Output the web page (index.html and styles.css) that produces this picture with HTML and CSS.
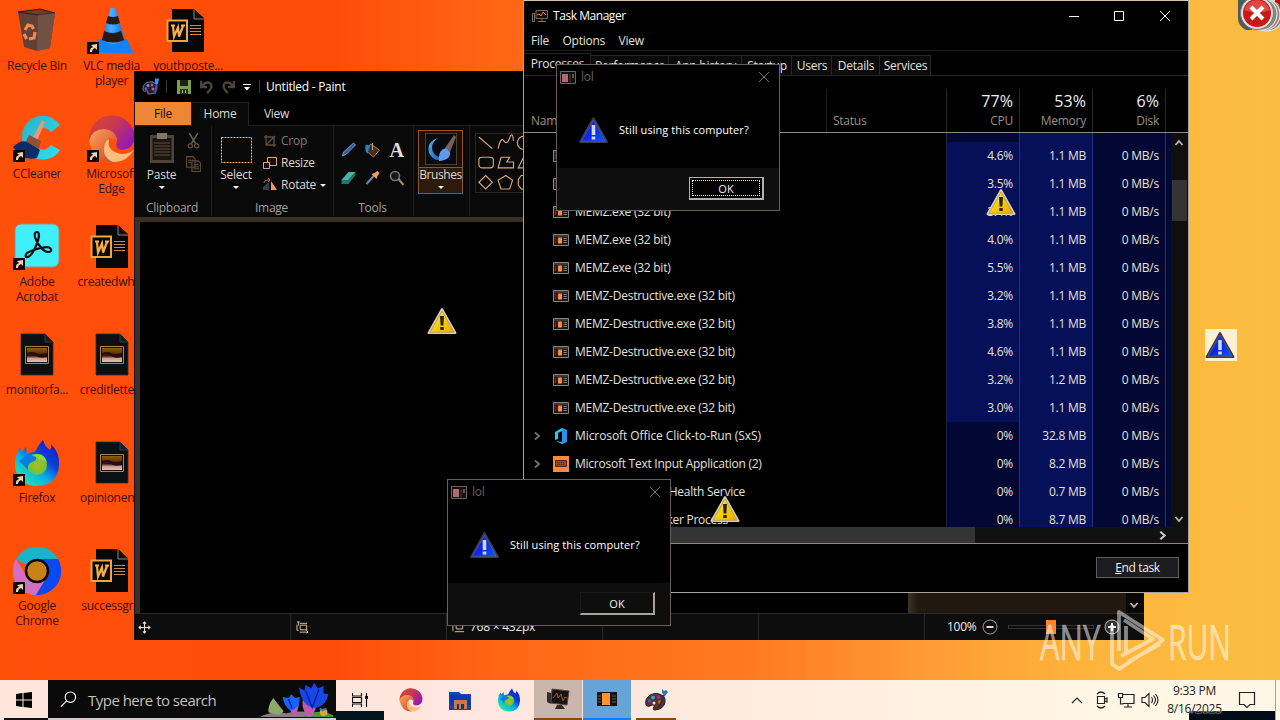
FILE: index.html
```html
<!DOCTYPE html>
<html lang="en">
<head>
<meta charset="utf-8">
<title>Desktop</title>
<link rel="stylesheet" href="styles.css">
</head>
<body>
<svg class="defs" width="0" height="0" aria-hidden="true">
  <defs>
    <linearGradient id="gYellow" x1="0" y1="0" x2="1" y2="1"><stop offset="0" stop-color="#fff36a"/><stop offset=".5" stop-color="#f3d00c"/><stop offset="1" stop-color="#f0a010"/></linearGradient>
    <linearGradient id="gBlue" x1="0" y1="0" x2="1" y2="1"><stop offset="0" stop-color="#2a2fe0"/><stop offset=".5" stop-color="#0c24e8"/><stop offset="1" stop-color="#0a60f0"/></linearGradient>
    <linearGradient id="gEdge" x1="0" y1="0" x2="1" y2=".6"><stop offset="0" stop-color="#d8452c"/><stop offset=".5" stop-color="#c83a50"/><stop offset="1" stop-color="#9a1ab0"/></linearGradient>
    <linearGradient id="gEdge2" x1="0" y1="0" x2="1" y2="1"><stop offset="0" stop-color="#ffa45c"/><stop offset="1" stop-color="#c84420"/></linearGradient>
    <linearGradient id="gFox" x1="1" y1="0" x2=".2" y2="1"><stop offset="0" stop-color="#0a14c0"/><stop offset=".4" stop-color="#0a40d8"/><stop offset=".65" stop-color="#0aaee8"/><stop offset="1" stop-color="#20f0a0"/></linearGradient>
    <radialGradient id="gGlobe"><stop offset="0" stop-color="#b8b820"/><stop offset="1" stop-color="#60c840"/></radialGradient>
    <linearGradient id="gCC" x1="0" y1="0" x2="1" y2="1"><stop offset="0" stop-color="#28b0c8"/><stop offset="1" stop-color="#30e0f0"/></linearGradient>
    <linearGradient id="gSun" x1="0" y1="0" x2="0" y2="1"><stop offset="0" stop-color="#8a6010"/><stop offset=".4" stop-color="#5a3008"/><stop offset=".55" stop-color="#301010"/><stop offset=".75" stop-color="#c8a090"/><stop offset="1" stop-color="#e0c0b0"/></linearGradient>
    <linearGradient id="gBrush" x1="0" y1="0" x2="1" y2="1"><stop offset="0" stop-color="#4ab8e8"/><stop offset="1" stop-color="#1658c8"/></linearGradient>
    <linearGradient id="gCone" x1="0" y1="0" x2="1" y2="0"><stop offset="0" stop-color="#0c70e8"/><stop offset=".4" stop-color="#4ab0ff"/><stop offset="1" stop-color="#0a66e0"/></linearGradient>

    <symbol id="warn" viewBox="0 0 30 28">
      <path d="M15 2 28.5 26H1.500Z" fill="url(#gYellow)" stroke="#d8cfc0" stroke-width="2" stroke-linejoin="round"/>
      <path d="M15 4 27 25.300H3Z" fill="none" stroke="#a87c10" stroke-width=".6"/>
      <path d="M13 9h4l-.6 9.500h-2.800ZM13.300 20h3.400v3h-3.400Z" fill="#2a220c"/>
    </symbol>
    <symbol id="info" viewBox="0 0 30 28">
      <path d="M15 2 28.500 26H1.500Z" fill="url(#gBlue)" stroke="#3c3a3c" stroke-width="2" stroke-linejoin="round"/>
      <path d="M15 4 27 25.300H3Z" fill="none" stroke="#5874d8" stroke-width=".5"/>
      <path d="M13.200 9h3.600v10h-3.600ZM13.200 20.500h3.600v3h-3.600Z" fill="#cfd8ff"/>
    </symbol>
    <symbol id="arrow" viewBox="0 0 12 12">
      <path d="M0 0h12v12H0Z" fill="#080808"/>
      <path d="M3 10V8q0-2 3-3L4 3l6-1v6L8 6Q5 7 5 10Z" fill="#ecd2a8"/>
    </symbol>
    <symbol id="word" viewBox="3 0 48 48">
      <path d="M11 2h22l10 9v34H11Z" fill="#070707"/>
      <path d="M33 2v10h10" fill="#16100c" stroke="#8a8480" stroke-width="1"/>
      <path d="M6.500 13.500h19.500v20.500H6.500Z" fill="#0a0806" stroke="#f0a63c" stroke-width="2"/>
      <path d="M10 18.500h4M12 19l1 10.500 4-9 1 9L22 19M20 18.500h4" fill="none" stroke="#f5b04a" stroke-width="2.200"/>
      <path d="M29 18.500h11M29 21.500h11M29 24.500h11M29 27.500h11" stroke="#c88850" stroke-width="1"/>
    </symbol>
    <symbol id="pic" viewBox="3 0 48 48">
      <path d="M11 3h24l8 8v33H11Z" fill="#0d1012" stroke="#26333a" stroke-width=".8"/>
      <path d="M35 3v8h8" fill="#1c1c1e" stroke="#33383a"/>
      <path d="M15.500 15.500h23v17h-23Z" fill="#150f09" stroke="#a88458" stroke-width="1"/>
      <path d="M17 17h20v14H17Z" fill="url(#gSun)"/>
      <path d="M17 22q6-2 9 0t11 0v4q-7 2-11-1t-9-1Z" fill="#2a0b0c"/>
    </symbol>
    <symbol id="edge" viewBox="0 0 48 48">
      <path d="M1 25A23 23 0 0 1 47 22Q46 34 34 35Q26 34 29 26Q28 15 17 15Q6 15 1 25Z" fill="url(#gEdge)"/>
      <path d="M1 25Q5 14 16 14Q28 15 29 26Q20 19 17 29Q15 39 25 47Q5 47 1 25Z" fill="url(#gEdge2)"/>
      <path d="M17 29Q13 42 25 47Q38 48 46 35Q36 42 27 37Q19 34 21 24Q18 25 17 29Z" fill="#ffbe80"/>
    </symbol>
    <symbol id="firefox" viewBox="0 0 48 48">
      <path d="M2 27Q2 15 7 9l2 4Q11 10 13 8l1 7q3-2 8-2Q26 5 30 1q2 7 7 10 2-3 1-6 9 9 8 21Q45 46 24 47 4 46 2 27Z" fill="url(#gFox)"/>
      <circle cx="24" cy="26" r="10" fill="url(#gGlobe)"/>
      <path d="M6 22q8-8 17-4 1 4-4 5-5 1-4 8-4-5-9-9Z" fill="#0a7ce0"/>
      <path d="M18 16q14-4 16 8-4-5-8-3-2-4-8-5Z" fill="#86dd30"/>
    </symbol>
    <symbol id="exe" viewBox="0 0 16 12">
      <path d="M.5.5h15v11H.5Z" fill="#1c1816" stroke="#8a8681"/>
      <path d="M1 2h14" stroke="#5c5854"/>
      <path d="M5 3.500h4v6H5Z" fill="#ff8a3c"/>
      <path d="M2.500 4v5" stroke="#702810" stroke-width="1.500"/>
      <path d="M10.500 4.500H14M10.500 6.500H14M10.500 8.500H14" stroke="#9a948c" stroke-width=".8"/>
    </symbol>
    <symbol id="lol" viewBox="0 0 16 13">
      <path d="M.5.500h15v12H.5Z" fill="#151010" stroke="#6c6662"/>
      <path d="M2 3h6v8H2Z" fill="#b06a72"/><path d="M9 3h2v8H9Z" fill="#3a2022"/><path d="M12 3h2v4h-2Z" fill="#555"/>
    </symbol>
    <symbol id="x" viewBox="0 0 12 12"><path d="m1 1 10 10M11 1 1 11" fill="none" stroke="currentColor"/></symbol>
    <symbol id="palette" viewBox="0 0 24 24">
      <path d="M2 17C0 9 8 4 15 6q7 2 6 8-1 7-10 8-3 0-1-3 1-3-2-2-4 3-6 0Z" fill="#5b3226" stroke="#2a1c24" stroke-width="1"/>
      <circle cx="9" cy="9.500" r="2" fill="#20a8c8"/><circle cx="14.500" cy="9" r="1.900" fill="#8c30b0"/><circle cx="5.500" cy="13" r="1.700" fill="#4a50d8"/><circle cx="16" cy="14" r="2" fill="#d06030"/><circle cx="10" cy="15" r="1.500" fill="#f0d8c8"/>
      <path d="M20 7 15 20" stroke="#23305c" stroke-width="2"/><path d="m18 1 2 2 2-1 2 2-3 4-3-3Z" fill="#2878c0"/>
    </symbol>
    <symbol id="palette-dark" viewBox="0 0 18 18">
      <path d="M1 12C0 6 6 3 11 4q5 2 4 6-1 6-8 6-2 0-1-2 0-2-2-1-2 1-3-1Z" fill="#2a1a24" stroke="#8a70a8"/>
      <circle cx="6" cy="7.500" r="1.500" fill="#30b8d0"/><circle cx="10" cy="7" r="1.400" fill="#c048b8"/><circle cx="4" cy="10.500" r="1.300" fill="#6468e8"/><circle cx="11" cy="11" r="1.500" fill="#e05848"/>
      <path d="m15 4-2 12" stroke="#2060c8" stroke-width="2"/><path d="m13 0 2 1 1-1 1 1-1 5h-3Z" fill="#3098e8"/>
    </symbol>
    <symbol id="chev" viewBox="0 0 10 10"><path d="m1.500 3 3.500 4 3.500-4" fill="none" stroke="currentColor" stroke-width="1.800"/></symbol>
  </defs>
</svg>

<div class="desktop">
  <div class="shortcuts">
    <div class="shortcut"><svg viewBox="0 0 48 48">
      <path d="M5 5 27 2 42 6 37 41 24 44 11 40Z" fill="#54403a" opacity=".92"/><path d="m5 5 20 3 17-2L27 2Z" fill="#7c3820" stroke="#2e1a14"/><path d="m25 8-1 36 13-3 5-35Z" fill="#77574c" opacity=".75"/>
      <g fill="none" stroke="#f08a50" stroke-width="3.200"><path d="m12 23 3-5 4 1 1.500 3M22 25l-1 6-5 1M13.500 32 11 27"/></g></svg><span>Recycle Bin</span></div>
    <div class="shortcut"><svg viewBox="0 0 48 48">
      <path d="M10 32h29l6 14H5Z" fill="#1482f8"/><path d="M22.500 1h5l9.500 33q-12 6-23 0Z" fill="url(#gCone)"/><path d="m20 9-2 7q7 3 14 0l-2-7q-5 2-10 0ZM16 24l-2 9q11 5 22 0l-3-9q-8 4-17 0Z" fill="#241a1a"/></svg><svg class="link"><use href="#arrow"/></svg><span>VLC media<br>player</span></div>
    <div class="shortcut"><svg><use href="#word"/></svg><span>youthposte...</span></div>

    <div class="shortcut"><svg viewBox="0 0 48 48">
      <path d="M47 10Q36-4 20 3 4 13 11 33q11 17 29 9 5-3 7-7l-9-5q-7 8-14 2-5-8 1-17 7-5 13 2Z" fill="url(#gCC)"/>
      <path d="m29 5 3 2-9 21-5-2Z" fill="#e49a78"/><path d="m16 20 12 6-3 10-14-5Z" fill="#90503c"/><path d="M0 32q8-8 14-5l13 8-3 8q-12 3-20-6Z" fill="#102c68"/></svg><svg class="link"><use href="#arrow"/></svg><span>CCleaner</span></div>
    <div class="shortcut"><svg><use href="#edge"/></svg><svg class="link"><use href="#arrow"/></svg><span>Microsoft<br>Edge</span></div>
    <div></div>

    <div class="shortcut"><svg viewBox="0 0 48 48"><rect x="2" y="1" width="44" height="43" rx="6" fill="#3ff0fc" stroke="#9c8c70"/>
      <path d="M24 9q-3 0-2 5 1 4 4 8 5 7 9 7 4 0 3-3-2-3-10-1-9 2-14 5-2 2-1 4 3 1 7-5 5-9 6-16 0-4-2-4Z" fill="none" stroke="#101010" stroke-width="2.200"/></svg><svg class="link"><use href="#arrow"/></svg><span>Adobe<br>Acrobat</span></div>
    <div class="shortcut doc"><svg><use href="#word"/></svg><span>createdwhe...</span></div>
    <div></div>

    <div class="shortcut"><svg><use href="#pic"/></svg><span>monitorfa...</span></div>
    <div class="shortcut doc"><svg><use href="#pic"/></svg><span>creditletter...</span></div>
    <div></div>

    <div class="shortcut"><svg><use href="#firefox"/></svg><svg class="link"><use href="#arrow"/></svg><span>Firefox</span></div>
    <div class="shortcut doc"><svg><use href="#pic"/></svg><span>opinionent...</span></div>
    <div></div>

    <div class="shortcut"><svg viewBox="0 0 48 48">
      <path d="M24 24 3 12A24 24 0 0 1 45 12Z" fill="#18b4cc"/><path d="M3 12A24 24 0 0 0 23 48L34 30 14 30Z" fill="#d070c0"/><path d="M45 12H24l10 18-11 18A24 24 0 0 0 45 12Z" fill="#0a48f0"/>
      <circle cx="24" cy="24" r="11" fill="#c88018" stroke="#080808" stroke-width="2.500"/></svg><svg class="link"><use href="#arrow"/></svg><span>Google<br>Chrome</span></div>
    <div class="shortcut"><svg><use href="#word"/></svg><span>successgr...</span></div>
    <div></div>
  </div>

  <section class="window paint">
    <header class="paint-title">
      <svg class="i18"><use href="#palette-dark"/></svg><i class="bar"></i>
      <svg class="save" viewBox="0 0 14 14"><path d="M0 0h14v14H0Z" fill="#7aa04c"/><path d="M3 0h8v6H3Z" fill="#1c2414"/><path d="M3 9h8v5H3Z" fill="#26301c"/><path d="M5 10h1v3H5Zm3 0h1v3H8Z" fill="#9ab070"/></svg>
      <svg class="undo" viewBox="0 0 14 14"><path d="M1 1v6h6M2 6Q6 1 10 3q4 4-3 10" fill="none" stroke="#4c433a" stroke-width="2.400"/></svg>
      <svg class="undo" viewBox="0 0 14 14"><path d="M13 1v6H7M12 6Q8 1 4 3q-4 4 3 10" fill="none" stroke="#4c433a" stroke-width="2.400"/></svg>
      <svg class="drop" viewBox="0 0 8 8"><path d="M0 .5h8" stroke="#fff"/><path d="M1 3h6L4 6.500Z" fill="#fff"/></svg><i class="bar"></i>
      <span>Untitled - Paint</span>
    </header>
    <nav class="paint-tabs"><span class="file">File</span><span class="home">Home</span><span class="view">View</span></nav>
    <div class="ribbon">
      <div class="group clipboard">
        <div class="tools-row">
          <div class="big"><svg viewBox="0 0 26 32"><path d="M1 3h24v28H1Z" fill="#4e4336"/><path d="M3.500 6h19v22h-19Z" fill="#1c1611"/><path d="M8 1h10v6H8Z" fill="#80756a"/><path d="M5 11h16M5 14h16M5 17h16M5 20h16M5 23h16" stroke="#5c4c3c"/></svg><span>Paste</span><b class="tri"></b></div>
          <div class="small-stack"><svg viewBox="0 0 16 16"><path d="m4 1 6 10M12 1 6 11" stroke="#6c6055" stroke-width="1.500"/><circle cx="5" cy="13" r="2" fill="none" stroke="#6c6055"/><circle cx="11" cy="13" r="2" fill="none" stroke="#6c6055"/></svg>
          <svg viewBox="0 0 16 16"><path d="M1.500 1.500h6l2 2v8h-8ZM6.500 5.500h6l2 2v8h-8Z" fill="#120e0a" stroke="#5c4c3c"/><path d="M8 9h5M8 11h5M8 13h5M3 5h3M3 7h3" stroke="#5c4c3c"/></svg></div>
        </div>
        <em>Clipboard</em>
      </div>
      <div class="group image">
        <div class="tools-row">
          <div class="big select"><svg viewBox="0 0 31 26"><path d="M.5.500h30v25H.5Z" fill="none" stroke="#f0bc88" stroke-dasharray="2 1"/></svg><span>Select</span><b class="tri"></b></div>
          <div class="commands">
            <div class="off"><svg viewBox="0 0 14 14"><path d="M3 1v10h10M1 3h10v10M3 11l9-9" fill="none" stroke="#5c4c40" stroke-width="1.400"/></svg>Crop</div>
            <div><svg viewBox="0 0 14 14"><path d="M4.500 1.500h9v8h-9Z" fill="#1a0c06" stroke="#eba474"/><path d="M.5 6.500h6v6h-6Z" fill="#1a0c06" stroke="#eba474"/></svg>Resize</div>
            <div><svg viewBox="0 0 14 14"><path d="M0 12V9l6-5v8Z" fill="#33404c"/><path d="M8 12V3l6 9Z" fill="#f09860"/><path d="M1 5q0-3 5-3M5 0l2 2-2 2" fill="none" stroke="#e06820"/></svg>Rotate<b class="tri"></b></div>
          </div>
        </div>
        <em>Image</em>
      </div>
      <div class="group tools">
        <div class="tool-grid">
          <svg viewBox="0 0 16 16"><path d="m2 14 1-4L13 1l2 2L6 12Z" fill="#3c58a0" stroke="#92a8dc" stroke-width=".8"/></svg>
          <svg viewBox="0 0 16 16"><path d="m6 2 9 6-6 7-7-6Z" fill="#443020" stroke="#a48060"/><path d="M1 3q3-1 4 2l-2 7q-3-3-2-9Z" fill="#1c88d0"/><path d="M8 1v7" stroke="#c8a078"/></svg>
          <span>A</span>
          <svg viewBox="0 0 16 16"><path d="m1 10 7-8h7l-7 8Z" fill="#48b4a8"/><path d="m1 10h7l7-8v3l-7 9H1Z" fill="#1f7872"/></svg>
          <svg viewBox="0 0 16 16"><path d="m2 14 8-9" stroke="#7088a8" stroke-width="2"/><path d="m7 4 3-1 3-2 2 2-2 3-1 3Z" fill="#f0a060"/></svg>
          <svg viewBox="0 0 16 16"><circle cx="6.500" cy="6" r="4.500" fill="#181818" stroke="#787370" stroke-width="1.600"/><path d="m10 9 5 6" stroke="#a08878" stroke-width="2"/></svg>
        </div>
        <em>Tools</em>
      </div>
      <div class="group brushes"><div class="brush-btn"><svg viewBox="0 0 32 32"><path d="M0 0h32v32H0Z" fill="#070a10" stroke="#987048"/><path d="M13 5Q1 9 4 20q6 11 16 5-12 0-13-10 0-6 6-10Z" fill="url(#gBrush)"/><path d="m20 15 9-13 2 2-6 15Z" fill="#78605a"/><path d="M14 24q0-7 7-9l4 4q1 8-11 9Z" fill="#609ae8"/></svg><span>Brushes</span><b class="tri"></b></div></div>
      <div class="group shapes"><svg viewBox="0 0 52 60"><g fill="none" stroke="#d8a678" stroke-width="1.200"><path d="m3 3 14 12M23 15q3-13 6-8t6-3 4 3"/><circle cx="50" cy="9" r="7"/><rect x="3" y="24" width="15" height="11" rx="3"/><path d="M26 24h9l-3 5h7v6H23ZM50 23l-6 12h8M10 43l7 7-7 7-7-7ZM31 43l7 5-3 9h-9l-3-9Z"/><path d="m47 43-3 4v6l3 4h5V43Z"/></g></svg></div>
    </div>
    <div class="work"><div class="canvas"></div><div class="backing"></div><div class="vscroll"><svg><use href="#chev"/></svg></div></div>
    <footer class="status">
      <div class="s1"><svg viewBox="0 0 12 12"><path d="M6 1v10M1 6h10M4.500 2.500 6 1l1.500 1.500M4.500 9.500 6 11l1.500-1.500M2.500 4.500 1 6l1.500 1.500M9.500 4.500 11 6 9.500 7.500" fill="none" stroke="#f0e0d0"/></svg></div>
      <div class="s2"><svg viewBox="0 0 14 12"><path d="M4.500 3.500h7v5h-7Z" fill="none" stroke="#e8c8a0"/><path d="M1 0h3M2.500 0v4M4 1.500h8M1 3v6h2M4 11h9M11 9l2 2-2 1" fill="none" stroke="#e8c8a0"/></svg></div>
      <div class="s3"><svg viewBox="0 0 14 12"><path d="M4.500 2.500h7v5h-7Z" fill="none" stroke="#e8c8a0"/><path d="M1 1v9M3 10.500h10" stroke="#e8c8a0"/></svg>768 × 432px</div>
      <div class="s4"></div>
      <div class="s5"><span>100%</span><svg viewBox="0 0 16 16"><circle cx="8" cy="8" r="7" fill="#101010" stroke="#a09a94"/><path d="M4.500 8h7" stroke="#ddd" stroke-width="2"/></svg><i class="track"><b></b></i><svg viewBox="0 0 16 16"><circle cx="8" cy="8" r="7" fill="#333" stroke="#c8c0b8"/><path d="M4 8h8M8 4v8" stroke="#eee" stroke-width="2"/></svg></div>
    </footer>
  </section>

  <section class="window taskmgr">
    <header class="tm-title"><svg class="tmicon" viewBox="0 0 16 14"><path d="M4 1.500h11.500v8H4Z" fill="#180c08" stroke="#76685c"/><path d="M5 6l2-1 2 2 2-4 3 3" fill="none" stroke="#f07038"/><path d="M.5 4.500h2v8h-2ZM6 12.500h8M10 10v2" fill="none" stroke="#80756c"/></svg><span>Task Manager</span>
      <div class="controls"><svg viewBox="0 0 12 12"><path d="M1 6.500h10" stroke="#fff"/></svg><svg viewBox="0 0 12 12"><path d="M1.500 1.500h9v9h-9Z" fill="none" stroke="#fff"/></svg><svg><use href="#x"/></svg></div></header>
    <nav class="tm-menu"><span>File</span><span>Options</span><span>View</span></nav>
    <div class="tm-tabs"><span class="on">Processes</span><span>Performance</span><span>App history</span><span>Startup</span><span>Users</span><span>Details</span><span>Services</span></div>
    <div class="heads"><div class="h-name">Name</div><div class="h-status">Status</div><div class="num"><b>77%</b>CPU</div><div class="num"><b>53%</b>Memory</div><div class="num"><b>6%</b>Disk</div><div></div></div>
    <div class="tm-body">
      <div class="rows">
        <div class="row first"><div></div><div></div><div class="idle"></div><div></div><div></div></div>
        <div class="row"><div><svg><use href="#exe"/></svg>MEMZ.exe (32 bit)</div><div></div><div>4.6%</div><div>1.1 MB</div><div>0 MB/s</div></div>
        <div class="row"><div><svg><use href="#exe"/></svg>MEMZ.exe (32 bit)</div><div></div><div>3.5%</div><div>1.1 MB</div><div>0 MB/s</div></div>
        <div class="row"><div><svg><use href="#exe"/></svg>MEMZ.exe (32 bit)</div><div></div><div>3.4%</div><div>1.1 MB</div><div>0 MB/s</div></div>
        <div class="row"><div><svg><use href="#exe"/></svg>MEMZ.exe (32 bit)</div><div></div><div>4.0%</div><div>1.1 MB</div><div>0 MB/s</div></div>
        <div class="row"><div><svg><use href="#exe"/></svg>MEMZ.exe (32 bit)</div><div></div><div>5.5%</div><div>1.1 MB</div><div>0 MB/s</div></div>
        <div class="row"><div><svg><use href="#exe"/></svg>MEMZ-Destructive.exe (32 bit)</div><div></div><div>3.2%</div><div>1.1 MB</div><div>0 MB/s</div></div>
        <div class="row"><div><svg><use href="#exe"/></svg>MEMZ-Destructive.exe (32 bit)</div><div></div><div>3.8%</div><div>1.1 MB</div><div>0 MB/s</div></div>
        <div class="row"><div><svg><use href="#exe"/></svg>MEMZ-Destructive.exe (32 bit)</div><div></div><div>4.6%</div><div>1.1 MB</div><div>0 MB/s</div></div>
        <div class="row"><div><svg><use href="#exe"/></svg>MEMZ-Destructive.exe (32 bit)</div><div></div><div>3.2%</div><div>1.2 MB</div><div>0 MB/s</div></div>
        <div class="row"><div><svg><use href="#exe"/></svg>MEMZ-Destructive.exe (32 bit)</div><div></div><div>3.0%</div><div>1.1 MB</div><div>0 MB/s</div></div>
        <div class="row parent office"><div><svg class="exp"><use href="#chev"/></svg><svg viewBox="0 0 16 16"><path d="M2 4 9 0l4 2v12l-4 2-6-3 6 1V3L5 5v6l-3 1Z" fill="#28c8e8"/><path d="m9 0 5 2v12l-5 2Z" fill="#2c90f0"/></svg>Microsoft Office Click-to-Run (SxS)</div><div></div><div class="idle">0%</div><div>32.8 MB</div><div>0 MB/s</div></div>
        <div class="row parent"><div><svg class="exp"><use href="#chev"/></svg><svg viewBox="0 0 16 16"><path d="M0 0h16v16H0Z" fill="#ff8a34"/><path d="M2.500 4.500h11v6h-11Z" fill="#8c4a28" stroke="#4c2818"/><path d="M4 6.500h8M4 8.500h8" stroke="#4c2818" stroke-dasharray="1 1"/></svg>Microsoft Text Input Application (2)</div><div></div><div class="idle">0%</div><div>8.2 MB</div><div>0 MB/s</div></div>
        <div class="row svc"><div>Microsoft Update Health Service</div><div></div><div class="idle">0%</div><div>0.7 MB</div><div>0 MB/s</div></div>
        <div class="row svc broker"><div>Runtime Broker Process</div><div></div><div class="idle">0%</div><div>8.7 MB</div><div>0 MB/s</div></div>
      </div>
      <div class="tm-scroll"><svg class="up"><use href="#chev"/></svg><i></i><svg><use href="#chev"/></svg></div>
    </div>
    <div class="hscroll"><i></i><svg><use href="#chev"/></svg></div>
    <footer class="tm-foot"><button><u>E</u>nd task</button></footer>
  </section>

  <section class="window dialog d1">
    <header><svg class="licon"><use href="#lol"/></svg><span>lol</span><svg class="dx"><use href="#x"/></svg></header>
    <div class="msg"><svg><use href="#info"/></svg><span>Still using this computer?</span></div>
    <footer><button class="focus"><span>OK</span></button></footer>
  </section>
  <section class="window dialog d2">
    <header><svg class="licon"><use href="#lol"/></svg><span>lol</span><svg class="dx"><use href="#x"/></svg></header>
    <div class="msg"><svg><use href="#info"/></svg><span>Still using this computer?</span></div>
    <footer><button><span>OK</span></button></footer>
  </section>

  <svg class="stray w1"><use href="#warn"/></svg>
  <svg class="stray w2"><use href="#warn"/></svg>
  <svg class="stray w3"><use href="#warn"/></svg>
  <div class="ghost"><svg><use href="#info"/></svg></div>
  <svg class="errors" viewBox="0 0 42 32"><path d="M0 0h14v30H8Q0 26 0 18Z" fill="#4d5c58"/><g stroke="#e8e0d8" stroke-width="1.200"><circle cx="29" cy="15" r="16" fill="#7c8080"/><circle cx="26" cy="14.500" r="16" fill="#8d8585"/><circle cx="23" cy="14" r="16" fill="#808888"/></g><circle cx="19" cy="13" r="16.500" fill="#e4dcd8" stroke="#777"/><circle cx="19" cy="13" r="14" fill="#c81818"/><path d="M6 10Q10 0 19 0t13 10q-12 5-26 0Z" fill="#dd4a44"/><path d="m13 7 12 12M25 7 13 19" stroke="#fff" stroke-width="4"/><path d="M37 0h5v8q-1-5-5-6Z" fill="#c01010"/></svg>

  <svg class="mark" viewBox="0 0 200 70">
    <g fill="#fff" fill-opacity=".5" stroke="#fff" stroke-opacity=".4" stroke-width=".7" font-family="Open Sans, sans-serif" font-size="50"><text transform="translate(4 54) scale(.64 1)" textLength="94" lengthAdjust="spacingAndGlyphs">ANY</text><text transform="translate(132 54) scale(.64 1)" textLength="98" lengthAdjust="spacingAndGlyphs">RUN</text></g>
    <g fill="none" stroke="#fff" stroke-opacity=".5" stroke-width="3.800" stroke-linejoin="round"><path d="M83 45V6l44 28-44 29-7-5V19M90 46V20M85 50l32-17-29-19M92 56l32-18"/></g>
  </svg>

  <footer class="taskbar">
    <div class="start"><svg viewBox="0 0 16 16"><path d="M0 2 6.500 1v6.500H0ZM7.500 1 16 0v7.500H7.500ZM0 8.500h6.500V15L0 14ZM7.500 8.500H16V16l-8.500-1Z" fill="#000"/></svg></div>
    <div class="search"><svg class="glass" viewBox="0 0 18 18"><circle cx="11" cy="6.500" r="5.500" fill="none" stroke="#fff" stroke-width="1.200"/><path d="m7 10.500-6 6" stroke="#fff" stroke-width="1.200"/></svg><span>Type here to search</span>
      <svg class="flowers" viewBox="0 0 82 38"><path d="M2 38q12-7 28-4 16-5 49 4Z" fill="#8c7888"/><path d="M48 38q15-10 31-2v2Z" fill="#48963c"/><path d="M16 18q-6 8-5 15 12 5 16-1-4-5-11-14Z" fill="#90a86c"/><path d="M52 38q-8-12-4-20l12 2q3 9-4 18ZM37 37l-6-12 12 0-3 12Z" fill="#c45ab0"/><path d="m43 7 6 3 1-6 6 4 3-6 4 6 6-3v8l5 1q-2 11-12 14-15 2-19-21Z" fill="#1648e8"/><path d="m26 17 6 1 3-4 4 4 5-1-1 8q-4 6-9 6-7-5-8-14Z" fill="#1764f8"/><path d="m50 10 7 18 7-19M32 19l4 10" fill="none" stroke="#0a1ca0" stroke-width="1.500"/><circle cx="69" cy="33" r="4" fill="#e8a030"/><path d="m65 29 3 2 4-2" stroke="#3080c0" stroke-width="2"/></svg></div>
    <div class="tview"><svg viewBox="0 0 16 16"><path d="M.5 1v3h9V1M.5 15v-3h9v3M.5 5.500h9v5h-9ZM14.500 1v14" fill="none" stroke="#111" stroke-width="1.200"/><path d="M13 4h3v3h-3Z" fill="#111"/></svg></div>
    <div class="app"><svg><use href="#edge"/></svg></div>
    <div class="app"><svg class="folder" viewBox="0 0 22 20"><path d="M0 2h10l2 2h10v16H0Z" fill="#0e48a8"/><path d="M1 5h20v10H1Z" fill="#0b38b8"/><path d="M5 10h13v9H5Z" fill="#c87850"/><path d="M8 14h2v5H8Zm4 0h3v5h-3Z" fill="#203068"/></svg></div>
    <div class="app"><svg><use href="#firefox"/></svg></div>
    <div class="app active"><svg viewBox="0 0 24 24"><path d="m6 2 17 2-2 14-16-2Z" fill="#161412" stroke="#504a45"/><path d="m1 5 4 1v11l-4-2ZM11 18h5l3 4H9Z" fill="#302c2a"/><path d="m7 11 4-5 1 5 3-4 2 7 2-4 2 1" fill="none" stroke="#b05020"/></svg></div>
    <div class="app memz"><svg class="memi" viewBox="0 0 20 14"><path d="M0 0h20v14H0Z" fill="#17120e"/><path d="M5 1h8v12H5Z" fill="#ff942c"/><path d="M1 4h3M1 7h3M1 10h3M15 4h4M15 7h4M15 10h4" stroke="#66625c"/></svg></div>
    <div class="app pt"><svg><use href="#palette"/></svg></div>
    <div class="tray">
      <svg class="caret" viewBox="0 0 12 8"><path d="m1 7 5-5 5 5" fill="none" stroke="#222" stroke-width="1.200"/></svg>
      <svg viewBox="0 0 16 18"><path d="M4.500 5.500h7v7h-7ZM12 8l2-1v4l-2-1M4 3q4-4 8 0M4 15q4 4 8 0" fill="none" stroke="#222" stroke-width="1.200"/></svg>
      <svg viewBox="0 0 18 16"><path d="M5 2.500h12v9H5.500M11 12v3M7 15h8M1.500 1.500h4v4h-4ZM3.500 6v6h3" fill="none" stroke="#222" stroke-width="1.200"/></svg>
      <svg class="vol" viewBox="0 0 18 16"><path d="M1 5.500h3l4-4v13l-4-4H1ZM10.500 5q2 3 0 6M12.500 3.500q4 4.500 0 9M14.500 2q5 6 0 12" fill="none" stroke="#222" stroke-width="1.100"/></svg>
      <div class="clock"><span>9:33 PM</span><span>8/16/2025</span></div>
      <svg class="note" viewBox="0 0 18 18"><path d="M1.500 1.500h15v12H12l-3 3-3-3H1.500Z" fill="none" stroke="#222" stroke-width="1.200"/></svg>
    </div>
    <i class="patch p1"></i><i class="patch p2"></i><i class="patch p3"></i><i class="peek"></i>
  </footer>
</div>
</body>
</html>
```
FILE: styles.css
```css
* { box-sizing: border-box; }
body { margin: 0; font: 12px/16px "Open Sans", "Noto Sans", sans-serif; letter-spacing: -.25px; overflow: hidden; }
svg { display: block; flex: none; }
i, em { font-style: normal; }
.defs { position: absolute; }
.desktop { position: relative; width: 1280px; height: 720px; overflow: hidden;
  background: linear-gradient(90deg, #ff500a 0, #ff4c08 330px, #ff6616 500px, #ff7a20 750px, #ff9c34 930px, #fdb33c 1080px, #fcbb3f 1200px, #fabd44 1280px); }

.shortcuts { display: grid; grid-template-columns: 74px 75px 78px; grid-template-rows: repeat(6, 108px); padding-top: 7px; }
.shortcut { position: relative; display: flex; flex-direction: column; align-items: center; gap: 3px; color: #3a0d02; line-height: 15px; text-align: center; white-space: nowrap; }
.shortcut > svg { width: 48px; height: 48px; }
.shortcut.doc span { padding-left: 4px; }
.shortcut .link { position: absolute; left: 13px; top: 35px; width: 12px; height: 12px; }

.window { position: absolute; display: flex; flex-direction: column; background: #000; color: #f0eee8; }
.tri { border: 3px solid transparent; border-top-color: #fff; border-bottom: 0; width: 0; height: 0; }

.paint { left: 134px; top: 71px; width: 1010px; height: 569px; border-left: 1px solid #111; }
.paint-title { height: 31px; display: flex; align-items: center; padding-left: 7px; color: #fff; }
.i18 { width: 18px; height: 18px; margin-right: 6px; }
.bar { width: 1px; height: 13px; background: #3c3834; }
.save { width: 14px; height: 14px; margin: 0 9px 0 10px; }
.undo { width: 14px; height: 14px; margin-right: 7px; }
.drop { width: 8px; height: 8px; margin: 2px 8px 0 1px; }
.paint-title .bar + span { margin-left: 6px; }
.paint-tabs { display: flex; height: 24px; line-height: 24px; text-align: center; border-bottom: 1px solid #222; color: #ddd9d4; }
.file { width: 56px; height: 23px; background: #ee8634; color: #180800; }
.home { width: 58px; height: 24px; background: #090909; border: 1px solid #222; border-bottom: 0; line-height: 22px; }
.view { width: 55px; }
.ribbon { display: flex; height: 91px; background: #090909; color: #dcd6d0; }
.group { display: flex; flex-direction: column; justify-content: space-between; border-right: 1px solid #1d1d1d; height: 90px; }
.group em { text-align: center; color: #a5a09c; margin-right: 2px; }
.clipboard { width: 77px; } .image { width: 122px; } .tools { width: 80px; } .brushes { width: 56px; }
.tools-row { display: flex; padding: 6px 0 0 12px; }
.big { display: flex; flex-direction: column; align-items: center; width: 29px; }
.big svg { width: 26px; height: 32px; margin-bottom: 3px; }
.big .tri, .brush-btn .tri { margin-top: 3px; }
.big.select svg { width: 31px; height: 26px; margin: 5px 0 4px; }
.small-stack { display: flex; flex-direction: column; gap: 6px; padding-left: 9px; }
.small-stack svg { width: 17px; height: 17px; }
.image .tools-row { padding: 6px 0 0 8px; gap: 11px; }
.big.select { width: 32px; }
.commands { display: flex; flex-direction: column; gap: 6px; margin-top: 1px; }
.commands div { display: flex; align-items: center; gap: 4px; height: 16px; }
.commands svg { width: 14px; height: 14px; }
.commands .off { color: #817c78; }
.tool-grid { display: grid; grid-template-columns: repeat(3, 17px); gap: 12px 7px; padding: 16px 0 0 6px; }
.tool-grid svg { width: 17px; height: 16px; }
.tool-grid span { font: bold 20px/16px "Liberation Serif", serif; color: #e6ddd4; text-align: center; }
.brushes { padding: 4px 0 0 4px; }
.brush-btn { width: 45px; height: 64px; border: 1px solid #8c5826; background: linear-gradient(#1b0e04 36px, #8c5826 36px, #8c5826 37px, #2c1a0c 37px); display: flex; flex-direction: column; align-items: center; padding-top: 2px; }
.brush-btn svg { width: 32px; height: 32px; margin-bottom: 2px; }
.brush-btn span { letter-spacing: -.45px; }
.shapes { padding: 7px 0 0 5px; border: 0; }
.shapes svg { width: 52px; height: 60px; border: 1px solid #262626; }
.work { flex: 1; display: flex; min-height: 0; padding: 5px 0 0 5px; background: #3a3026; }
.canvas { width: 768px; background: #000; }
.backing { flex: 1; background: linear-gradient(90deg, #3a3328, #21190f 10px); }
.vscroll { width: 18px; background: #080808; display: flex; flex-direction: column; justify-content: flex-end; align-items: center; padding: 0 2px 3px 0; color: #bbb; }
.vscroll svg { width: 10px; height: 10px; }
.status { height: 27px; background: #0d0d0d; border-top: 1px solid #2a2a2a; display: flex; }
.status > div { display: flex; align-items: center; border-right: 1px solid #262626; }
.status svg { width: 13px; height: 13px; margin: 0 5px; }
.status .s1 { width: 156px; } .status .s1 svg { margin-left: 3px; }
.status .s2, .status .s3 { width: 156px; }
.s4 { width: 322px; background: linear-gradient(90deg, transparent 155px, #262626 155px, #262626 156px, transparent 156px); }
.status .s5 { flex: 1; padding-left: 22px; border: 0; }
.status .s5 svg { width: 16px; height: 16px; margin: 0 0 0 5px; }
.track { width: 86px; height: 4px; border: 1px solid #333; margin-left: 10px; display: flex; align-items: center; justify-content: center; }
.track b { width: 10px; height: 14px; flex: none; background: #ff8430; }
.status .s5 .track + svg { margin-left: 10px; }

.taskmgr { left: 523px; top: 0; width: 666px; height: 593px; border: 1px solid #aaa39a; border-top-color: #d8c6a8; color: #e4e1dc; }
.tm-title { height: 30px; display: flex; align-items: center; padding-left: 8px; gap: 5px; color: #fff; }
.tm-title span { letter-spacing: -.45px; }
.tmicon { width: 16px; height: 14px; }
.controls { margin-left: auto; display: flex; gap: 33px; padding-right: 17px; }
.controls svg { width: 12px; height: 12px; position: relative; left: -1px; }
.controls svg:last-child { left: 0; }
.tm-menu { height: 20px; display: flex; gap: 13.500px; padding: 2px 0 0 7px; border-bottom: 1px solid #1c1c1c; }
.tm-tabs { height: 25px; display: flex; align-items: flex-end; border-bottom: 1px solid #252525; }
.tm-tabs span { height: 20px; line-height: 19px; padding-left: 1px; text-align: center; background: #0a0a0a; border: 1px solid #262626; border-left: 0; border-bottom: 0; }
.tm-tabs span:nth-child(2) { width: 78px; } .tm-tabs span:nth-child(3) { width: 73px; } .tm-tabs span:nth-child(4) { width: 50px; }
.tm-tabs span:nth-child(5) { width: 40px; } .tm-tabs span:nth-child(6) { width: 48px; } .tm-tabs span:nth-child(7) { width: 51px; }
.tm-tabs .on { width: 67px; height: 22px; background: #000; }
.heads, .row { display: grid; grid-template-columns: 303px 120px 73px 73px 73px 1fr; }
.heads { height: 57px; color: #9c9080; border-bottom: 1px solid #8d8882; }
.heads > div { display: flex; flex-direction: column; justify-content: flex-end; padding: 0 6px 3px; margin-top: 13px; border-right: 1px solid #262626; }
.heads .h-name { border-right-color: #1c1c1c; padding-left: 7px; }
.heads > div:last-child { border: 0; }
.heads .num { text-align: right; padding-right: 6px; }
.heads b { font-size: 16px; font-weight: 400; line-height: 24px; color: #eee; letter-spacing: .1px; }
.tm-body { height: 394px; display: flex; overflow: hidden; }
.rows { width: 647px; }
.row { height: 28px; line-height: 28px; grid-template-columns: 303px 120px 73px 73px 73px 5px; }
.row.first { height: 9px; }
.row > div { text-align: right; padding-right: 6px; white-space: nowrap; }
.row > div:first-child { display: flex; align-items: center; gap: 6px; padding-left: 29px; }
.row > div:first-child svg { width: 16px; height: 12px; }
.row > div:nth-child(n+3) { background: #061058; border-right: 1px solid #23307a; }
.row > div.idle, .row > div:nth-child(5) { background: #020833; }
.row > div:nth-child(2) { border-right: 1px solid #1d2244; }
.row::after { content: ""; background: #020833; }
.row.parent > div:first-child { padding-left: 8px; }
.row.parent > div:first-child svg { width: 16px; height: 16px; }
.row.parent > div:first-child .exp { width: 10px; height: 10px; color: #77736d; transform: rotate(-90deg); margin-right: 5px; }
.row.office > div:first-child { letter-spacing: -.08px; }
.row.svc > div:first-child { justify-content: flex-end; padding-right: 82px; }
.row.broker > div:first-child { padding-right: 99px; }
.tm-scroll { width: 17px; background: #0f0f0f; display: flex; flex-direction: column; align-items: center; padding: 5px 1px 3px 0; color: #bbb; }
.tm-scroll svg { width: 10px; height: 10px; }
.tm-scroll .up { transform: rotate(180deg); }
.tm-scroll i { width: 15px; height: 41px; margin: 32px 0 auto; background: #343434; }
.hscroll { height: 17px; display: flex; align-items: center; background: #111; border-bottom: 1px solid #8d8882; }
.hscroll i { width: 451px; height: 16px; background: #343434; }
.hscroll svg { width: 11px; height: 11px; margin-left: 182px; transform: rotate(-90deg); color: #ccc; }
.tm-foot { flex: 1; display: flex; justify-content: flex-end; padding: 13px 9px 0; }
button { font: inherit; letter-spacing: inherit; color: #eee; padding: 0; }
.tm-foot button { width: 83px; height: 21px; background: #1d1d1f; border: 1px solid #5c5c5c; letter-spacing: -.35px; }

.dialog { width: 224px; height: 147px; border: 1px solid #656059; letter-spacing: 0; }
.d1 { left: 556px; top: 64px; } .d2 { left: 447px; top: 479px; }
.dialog header { height: 24px; display: flex; align-items: center; padding-left: 3px; color: #66625e; gap: 5px; letter-spacing: -.25px; }
.licon { width: 16px; height: 13px; }
.dx { width: 12px; height: 12px; margin: 0 9px 0 auto; color: #77736e; }
.msg { flex: 1; display: flex; align-items: center; padding: 3px 0 0 21px; gap: 10px; font-size: 11px; letter-spacing: .07px; color: #fff; }
.msg svg { width: 31px; height: 28px; }
.dialog footer { height: 42px; background: #0e0e0e; display: flex; justify-content: flex-end; padding: 9px 15px; }
.dialog button { width: 75px; height: 23px; background: #0e0e0e; border: 1px solid #181818; border-right: 2px solid #a8a29a; border-bottom: 2px solid #a8a29a; font-size: 11px; line-height: 15px; display: flex; padding: 2px; }
.dialog button span { flex: 1; height: 16px; border: 1px solid transparent; }
.dialog .focus { background: #000; border-color: #b4b0a8; }
.dialog .focus span { border: 1px dotted #eee; }

.stray { position: absolute; width: 30px; height: 28px; }
.w1 { left: 427px; top: 307px; } .w2 { left: 986px; top: 188px; } .w3 { left: 710px; top: 495px; }
.ghost { position: absolute; left: 1205px; top: 329px; width: 32px; height: 32px; background: #fff0cf; padding: 2px 0 0; }
.ghost svg { width: 30px; height: 28px; }
.errors { position: absolute; left: 1238px; top: 0; width: 42px; height: 32px; }
.mark { position: absolute; left: 1036px; top: 606px; width: 200px; height: 70px; }

.taskbar { position: absolute; left: 0; right: 0; top: 680px; height: 40px; display: flex; background: linear-gradient(90deg, #ffe5dc, #fee7de 600px, #fff0e2 900px, #fff6e6 1100px); }
.start { width: 48px; display: grid; place-items: center; }
.start svg { width: 16px; height: 16px; }
.search { width: 288px; height: 40px; background: #0a0a0a; border-bottom: 2px solid #d0cccc; display: flex; align-items: center; color: #c4c0bc; font-size: 15px; letter-spacing: -.52px; padding-left: 12px; }
.glass { width: 17px; height: 17px; margin-right: 11px; }
.search span { padding-top: 2px; }
.flowers { width: 78px; height: 38px; margin-left: auto; }
.tview { width: 51px; display: grid; place-items: center; padding-right: 4px; }
.tview svg { width: 16px; height: 16px; }
.app { width: 48px; margin-right: 1px; display: grid; place-items: center; }
.app svg { width: 24px; height: 24px; }
.app .folder { width: 22px; height: 20px; }
.app .memi { width: 20px; height: 14px; }
.active { background: #cbb6ac; border-bottom: 2px solid #8c4812; }
.memz { background: #66a4d8; border-bottom: 2px solid #1080ef; }
.pt { background: linear-gradient(#8c4812, #8c4812) center bottom / 40px 2px no-repeat; }
.tray { margin-left: auto; display: flex; align-items: center; padding-right: 24px; gap: 6.500px; color: #222; }
.tray > svg { width: 18px; height: 18px; }
.tray .caret { width: 12px; height: 8px; margin-right: 3px; }
.clock { display: flex; flex-direction: column; align-items: center; line-height: 18px; width: 54px; position: relative; z-index: 1; margin: 0 0 1px 2px; text-shadow: 0 0 1px #fff6e6, 0 0 2px #fff6e6; }
.tray .note { margin-left: 10px; }
.patch { position: absolute; background: #02141c; }
.p1 { left: 4px; top: 38px; width: 44px; height: 2px; }
.p2 { left: 336px; top: 31px; width: 48px; height: 9px; }
.p3 { left: 1189px; top: 31px; width: 86px; height: 9px; background: #020c18; }
.peek { position: absolute; left: 1275px; top: 0; width: 1px; height: 40px; background: #a8a298; }
```
